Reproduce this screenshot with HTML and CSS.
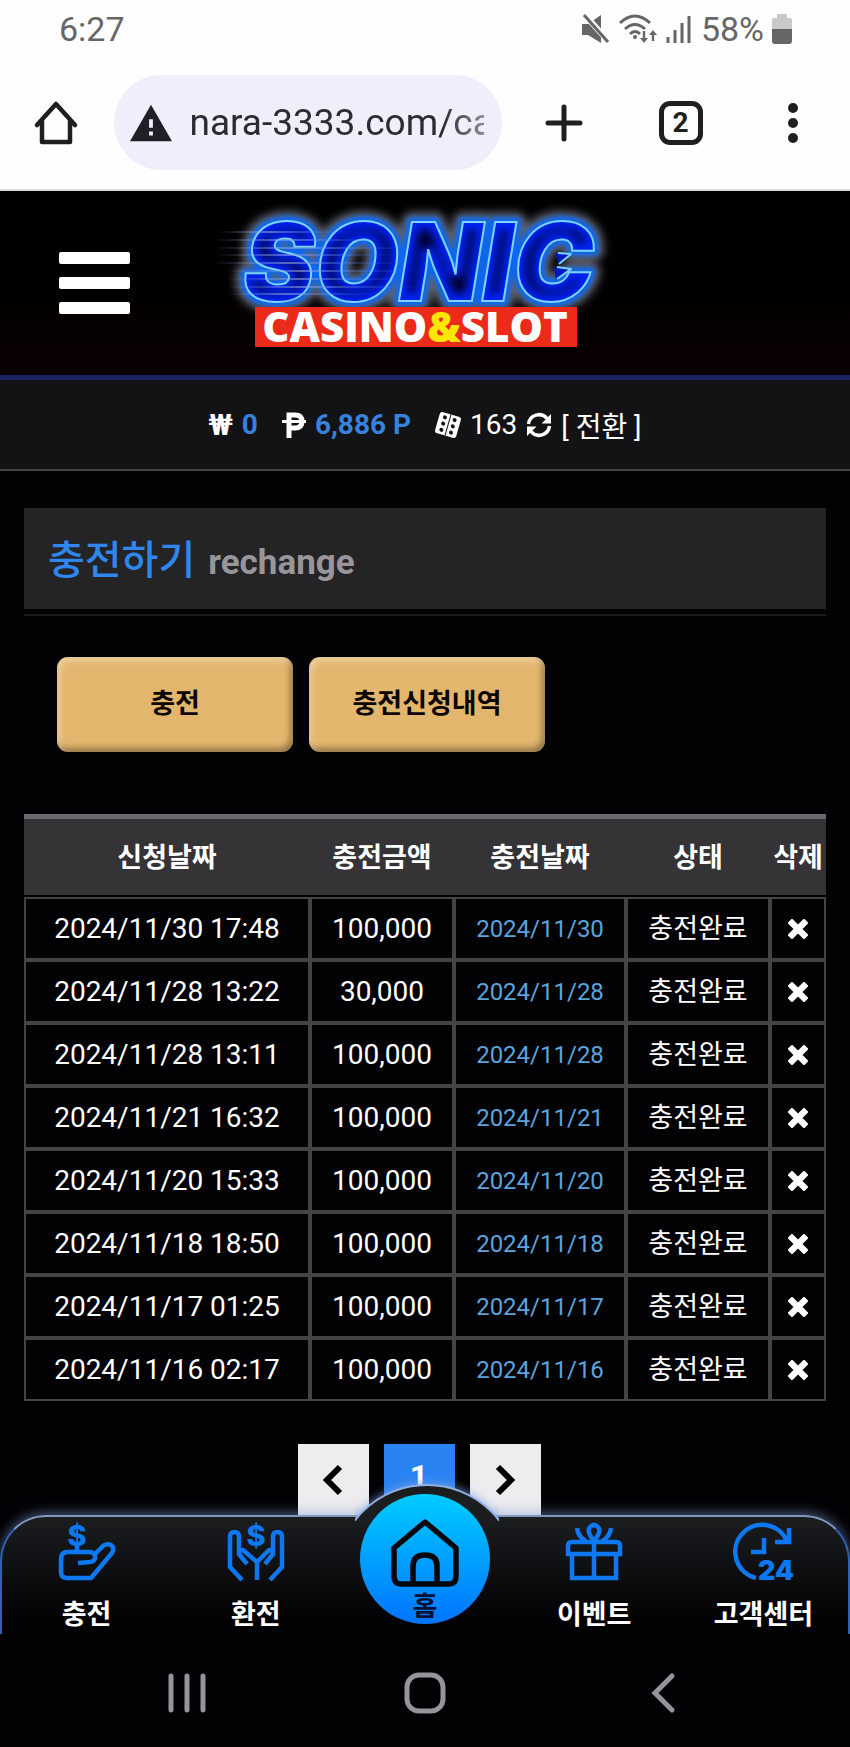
FILE: index.html
```html
<!DOCTYPE html>
<html lang="ko">
<head>
    <meta charset="UTF-8">
    <meta name="viewport" content="width=device-width, initial-scale=1.0">
    <title>충전하기</title>
    <link rel="stylesheet" href="styles.css">
</head>
<body>

    <!-- shared icons -->
    <svg class="sprite" aria-hidden="true">
        <symbol id="icon-x" viewBox="0 0 20 20">
            <path d="M4 4l12 12M16 4L4 16" stroke="#fff" stroke-width="6.4" stroke-linecap="square" stroke-linejoin="round" fill="none"/>
        </symbol>
    </svg>

    <div class="status-bar">
        <span>6:27</span>
        <div class="status-icons">
            <svg width="30" height="30" viewBox="0 0 30 30">
                <path d="M1 10h6l13-9v28l-13-8H1z" fill="#666"/>
                <path d="M3 0l26 29" stroke="#fdfdfd" stroke-width="6"/>
                <path d="M3 1l24 27" stroke="#666" stroke-width="3"/>
            </svg>
            <svg width="38" height="30" viewBox="0 0 38 30" fill="none" stroke="#666" stroke-width="3">
                <path d="M1 9q15-14 30 0M6 15q10-9 20 0M11 20q5-5 10 0"/>
                <circle cx="16" cy="23" r="2" fill="#666" stroke="none"/>
                <path d="M25 17v10M34 27V18" stroke-width="2.4"/>
                <path d="M21 24l4 5 4-5zM30 21l4-5 4 5z" fill="#666" stroke="none"/>
            </svg>
            <svg width="28" height="30" viewBox="0 0 28 30" stroke="#666" stroke-width="3">
                <path d="M3 23v6M10 16v13M17 9v20M24 2v27"/>
            </svg>
            <span>58%</span>
            <svg width="20" height="30" viewBox="0 0 20 30">
                <path d="M5 0h10v4h3q2 0 2 2v9H0V6q0-2 2-2h3z" fill="#c9c9c9"/>
                <path d="M0 15h20v12q0 3-3 3H3q-3 0-3-3z" fill="#666"/>
            </svg>
        </div>
    </div>

    <div class="browser-bar">
        <button class="bar-button" aria-label="Home">
            <svg width="44" height="44" viewBox="0 0 44 44" fill="none" stroke="#1f1f21" stroke-width="4.5" stroke-linejoin="round" stroke-linecap="round">
                <path d="M3 24L22 3l19 21M8 20v21h28V20"/>
            </svg>
        </button>
        <div class="url">
            <svg width="42" height="38" viewBox="0 0 44 38">
                <path d="M22 0l22 38H0z" fill="#1f1f25"/>
                <path d="M22 15v9M22 28v4" stroke="#f0eefa" stroke-width="4"/>
            </svg>
            <input class="url-text" type="text" value="nara-3333.com/ca" aria-label="URL">
        </div>
        <button class="bar-button" aria-label="New tab">
            <svg width="38" height="38" viewBox="0 0 38 38" stroke="#1f1f21" stroke-width="5" stroke-linecap="round">
                <path d="M19 3v32M3 19h32"/>
            </svg>
        </button>
        <button class="tab-count">2</button>
        <button class="bar-button" aria-label="Menu">
            <svg width="10" height="40" viewBox="0 0 10 40" fill="#1f1f21">
                <circle cx="5" cy="5" r="5"/><circle cx="5" cy="20" r="5"/><circle cx="5" cy="35" r="5"/>
            </svg>
        </button>
    </div>

    <header class="header">
        <button class="menu-button" aria-label="메뉴">
            <span></span><span></span><span></span>
        </button>
        <a href="#" class="logo">
            <svg width="425" height="170" viewBox="200 198 425 170">
                <defs>
                    <text id="sonic" x="243" y="301" class="sonic">SONIC</text>
                    <clipPath id="sonic-clip"><use href="#sonic"/></clipPath>
                    <filter id="blur2"><feGaussianBlur stdDeviation="2"/></filter>
                    <filter id="blur4"><feGaussianBlur stdDeviation="4"/></filter>
                    <linearGradient id="speed" x1="0" x2="1">
                        <stop offset="0" stop-color="#8fa4d8" stop-opacity="0"/>
                        <stop offset=".4" stop-color="#8fa4d8" stop-opacity=".6"/>
                        <stop offset="1" stop-color="#3a6cff" stop-opacity="0"/>
                    </linearGradient>
                </defs>
                <use href="#sonic" fill="none" stroke="#9aa3b8" stroke-width="20" stroke-linejoin="round" opacity=".6" filter="url(#blur4)"/>
                <use href="#sonic" fill="#0b62e8" stroke="#0b66ee" stroke-width="10" stroke-linejoin="round" filter="url(#blur2)"/>
                <g clip-path="url(#sonic-clip)">
                    <rect x="230" y="215" width="390" height="95" fill="#010232"/>
                    <use href="#sonic" fill="none" stroke="#0024f4" stroke-width="15" filter="url(#blur4)"/>
                </g>
                <use href="#sonic" fill="none" stroke="#79d4ff" stroke-width="2"/>
                <!-- teeth inside the last letter -->
                <path d="M555 253l16 1-12 10zM554 267l17 2-15 11z" fill="#0018c0"/>
                <path d="M558 253l13 1-12 10M557 267l14 2-14 10" fill="none" stroke="#79d4ff" stroke-width="2" stroke-linejoin="round"/>
                <g fill="url(#speed)">
                    <rect x="218" y="231" width="130" height="2"/>
                    <rect x="214" y="239" width="170" height="2"/>
                    <rect x="214" y="247" width="200" height="2"/>
                    <rect x="216" y="254" width="180" height="2"/>
                    <rect x="214" y="262" width="190" height="2"/>
                    <rect x="226" y="270" width="190" height="2"/>
                    <rect x="228" y="278" width="180" height="2"/>
                    <rect x="228" y="286" width="190" height="2"/>
                    <rect x="228" y="293" width="150" height="2"/>
                </g>
                <rect x="255" y="307" width="322" height="40" fill="#ec2a1a"/>
                <text x="415" y="342" text-anchor="middle" class="casino">CASINO<tspan fill="#ffe600">&amp;</tspan>SLOT</text>
            </svg>
        </a>
    </header>

    <div class="account">
        <span class="account-item">
            <span class="won">₩</span>
            <b>0</b>
        </span>
        <span class="account-item">
            <svg width="24" height="26" viewBox="0 0 24 26" fill="none" stroke="#fff">
                <path d="M7 26V3h6q7 0 7 6.500t-7 6.500H7" stroke-width="5"/>
                <path d="M0 9.500h24" stroke-width="3"/>
            </svg>
            <b>6,886 P</b>
        </span>
        <span class="account-item">
            <svg width="26" height="26" viewBox="0 0 26 26">
                <g transform="rotate(16 13 13)">
                    <rect x="2" y="2" width="22" height="22" rx="3" fill="#fff"/>
                    <path d="M13 2v22" stroke="#131214" stroke-width="1"/>
                    <g fill="#131214">
                        <circle cx="8" cy="6.500" r="2"/><circle cx="8" cy="13" r="2"/><circle cx="8" cy="19.500" r="2"/>
                        <circle cx="18" cy="6.500" r="2"/><circle cx="18" cy="13" r="2"/><circle cx="18" cy="19.500" r="2"/>
                    </g>
                </g>
            </svg>
            <span>163</span>
            <svg width="26" height="26" viewBox="0 0 26 26" fill="none" stroke="#fff" stroke-width="3.500">
                <path d="M2.500 12A10.500 10.500 0 0 1 21 6.500M23.500 14A10.500 10.500 0 0 1 5 19.500"/>
                <path d="M25 2v9.500h-9.500zM1 24v-9.500h9.500z" fill="#fff" stroke="none"/>
            </svg>
            <a href="#">[ 전환 ]</a>
        </span>
    </div>

    <main class="content">
        <div class="title-box">
            <h1 class="title">충전하기 <span>rechange</span></h1>
        </div>

        <div class="buttons">
            <button class="gold-button">충전</button>
            <button class="gold-button">충전신청내역</button>
        </div>

        <table class="history">
            <colgroup>
                <col class="col-date"><col class="col-amount"><col class="col-done"><col class="col-state"><col class="col-delete">
            </colgroup>
            <thead>
                <tr><th>신청날짜</th><th>충전금액</th><th>충전날짜</th><th>상태</th><th>삭제</th></tr>
            </thead>
            <tbody>
                <tr>
                    <td>2024/11/30 17:48</td><td>100,000</td><td class="done">2024/11/30</td><td class="state">충전완료</td>
                    <td><button class="delete" aria-label="삭제"><svg width="20" height="20"><use href="#icon-x"/></svg></button></td>
                </tr>
                <tr>
                    <td>2024/11/28 13:22</td><td>30,000</td><td class="done">2024/11/28</td><td class="state">충전완료</td>
                    <td><button class="delete" aria-label="삭제"><svg width="20" height="20"><use href="#icon-x"/></svg></button></td>
                </tr>
                <tr>
                    <td>2024/11/28 13:11</td><td>100,000</td><td class="done">2024/11/28</td><td class="state">충전완료</td>
                    <td><button class="delete" aria-label="삭제"><svg width="20" height="20"><use href="#icon-x"/></svg></button></td>
                </tr>
                <tr>
                    <td>2024/11/21 16:32</td><td>100,000</td><td class="done">2024/11/21</td><td class="state">충전완료</td>
                    <td><button class="delete" aria-label="삭제"><svg width="20" height="20"><use href="#icon-x"/></svg></button></td>
                </tr>
                <tr>
                    <td>2024/11/20 15:33</td><td>100,000</td><td class="done">2024/11/20</td><td class="state">충전완료</td>
                    <td><button class="delete" aria-label="삭제"><svg width="20" height="20"><use href="#icon-x"/></svg></button></td>
                </tr>
                <tr>
                    <td>2024/11/18 18:50</td><td>100,000</td><td class="done">2024/11/18</td><td class="state">충전완료</td>
                    <td><button class="delete" aria-label="삭제"><svg width="20" height="20"><use href="#icon-x"/></svg></button></td>
                </tr>
                <tr>
                    <td>2024/11/17 01:25</td><td>100,000</td><td class="done">2024/11/17</td><td class="state">충전완료</td>
                    <td><button class="delete" aria-label="삭제"><svg width="20" height="20"><use href="#icon-x"/></svg></button></td>
                </tr>
                <tr>
                    <td>2024/11/16 02:17</td><td>100,000</td><td class="done">2024/11/16</td><td class="state">충전완료</td>
                    <td><button class="delete" aria-label="삭제"><svg width="20" height="20"><use href="#icon-x"/></svg></button></td>
                </tr>
            </tbody>
        </table>

        <div class="pager">
            <a href="#" class="page" aria-label="이전">
                <svg width="20" height="30" viewBox="0 0 20 30" fill="none" stroke="#000" stroke-width="6"><path d="M17 2L4 15l13 13"/></svg>
            </a>
            <a href="#" class="page current">1</a>
            <a href="#" class="page" aria-label="다음">
                <svg width="20" height="30" viewBox="0 0 20 30" fill="none" stroke="#000" stroke-width="6"><path d="M3 2l13 13L3 28"/></svg>
            </a>
        </div>
    </main>

    <nav class="bottom-nav">
        <a href="#" class="nav-item">
            <svg width="58" height="58" viewBox="0 0 58 58" fill="none" stroke="#0d78f2" stroke-width="4.500" stroke-linejoin="round">
                <text x="19" y="23" class="dollar">$</text>
                <path d="M19 22v6"/>
                <path d="M20 40l12-1q6-1 5-6-1-4-6-4H10q-7 0-7 7v13q0 6 6 6h24l21-25q3-5-1-8-4-2-8 1l-9 9"/>
            </svg>
            <span>충전</span>
        </a>
        <a href="#" class="nav-item">
            <svg width="58" height="58" viewBox="0 0 58 58" fill="none" stroke="#0d78f2" stroke-width="4.500" stroke-linejoin="round">
                <text x="29" y="23" class="dollar">$</text>
                <path d="M15 57L3 44V14q0-5 4.500-5t4.500 5v17l8 10M12 31q0-4 4-4l14 12v18M43 57l12-13V14q0-5-4.500-5t-4.500 5v17l-8 10M46 31q0-4-4-4L30 39"/>
            </svg>
            <span>환전</span>
        </a>
        <a href="#" class="nav-item home">
            <svg width="68" height="68" viewBox="0 0 68 68" fill="none" stroke="#05070c" stroke-width="5.500" stroke-linejoin="round">
                <path d="M34 3L3 29v28q0 8 7 8h48q7 0 7-8V29zM22 65V47q0-11 12-11t12 11v18"/>
            </svg>
            <span>홈</span>
        </a>
        <a href="#" class="nav-item">
            <svg width="58" height="58" viewBox="0 0 58 58" fill="none" stroke="#0d78f2" stroke-width="4.500">
                <path d="M3 31V23q0-4 4-4h44q4 0 4 4v8zM7 31v24h44V31M29 19v36"/>
                <path d="M29 18q-8-10-4-14 4-4 8 0 4 4-4 14zM12 5q1 9 9 13M46 5q-1 9-9 13"/>
            </svg>
            <span>이벤트</span>
        </a>
        <a href="#" class="nav-item">
            <svg width="58" height="58" viewBox="0 0 58 58" fill="none" stroke="#0d78f2" stroke-width="4.500">
                <path d="M22 55A27 27 0 1 1 53 18M55 5v14H41M30 15v14H17"/>
                <text x="42" y="57" class="hours">24</text>
            </svg>
            <span>고객센터</span>
        </a>
    </nav>

    <div class="system-nav">
        <button aria-label="Recents">
            <svg width="38" height="40" viewBox="0 0 38 40" stroke="#969498" stroke-width="5" stroke-linecap="round"><path d="M3 3v34M19 3v34M35 3v34"/></svg>
        </button>
        <button aria-label="Home screen">
            <svg width="42" height="42" viewBox="0 0 42 42" fill="none" stroke="#969498" stroke-width="5"><rect x="3" y="3" width="36" height="36" rx="12"/></svg>
        </button>
        <button aria-label="Back">
            <svg width="24" height="40" viewBox="0 0 24 40" fill="none" stroke="#969498" stroke-width="5" stroke-linecap="round"><path d="M21 3L4 20l17 17"/></svg>
        </button>
    </div>

</body>
</html>
```
FILE: styles.css
```css
* {
    box-sizing: border-box;
}
body {
    margin: 0;
    background-color: #020104;
    color: #fff;
    font-family: Roboto, "Noto Sans CJK KR", sans-serif;
    font-size: 28px;
}
button {
    background: none;
    border: none;
    padding: 0;
    font-family: inherit;
    cursor: pointer;
}
a {
    color: inherit;
    text-decoration: none;
}
svg {
    display: block;
    flex: none;
    overflow: visible;
}
.sprite {
    position: absolute;
    width: 0;
    height: 0;
}

/* phone status bar */
.status-bar {
    display: flex;
    justify-content: space-between;
    align-items: center;
    height: 58px;
    padding: 0 58px 0 59px;
    background-color: #fefefe;
    color: #666;
    font-size: 34px;
}
.status-icons {
    display: flex;
    align-items: center;
    gap: 8px;
}

/* browser toolbar */
.browser-bar {
    display: flex;
    align-items: center;
    justify-content: space-between;
    height: 133px;
    padding: 0 52px 2px 34px;
    background-color: #fefefe;
    border-bottom: 2px solid #d9dcdc;
}
.url {
    display: flex;
    align-items: center;
    gap: 18px;
    width: 388px;
    height: 95px;
    margin-right: 8px;
    padding: 0 18px 0 16px;
    border-radius: 48px;
    background-color: #f0eefa;
}
.url-text {
    flex: 1;
    min-width: 0;
    padding: 0;
    border: none;
    outline: none;
    background: none;
    color: #2b2b31;
    font-family: inherit;
    font-size: 37px;
    -webkit-mask-image: linear-gradient(to right, #000 86%, rgba(0, 0, 0, .5));
    mask-image: linear-gradient(to right, #000 86%, rgba(0, 0, 0, .5));
}
.tab-count {
    width: 44px;
    height: 44px;
    margin-left: 40px;
    border: 5px solid #1f1f21;
    border-radius: 11px;
    color: #1f1f21;
    font-size: 28px;
    font-weight: bold;
    line-height: 34px;
}
.bar-button:last-child {
    margin-left: 50px;
}

/* site header */
.header {
    display: flex;
    align-items: center;
    height: 189px;
    padding-left: 59px;
    background: linear-gradient(#000, #030001 60%, #0a0002);
    border-bottom: 5px solid #1c2260;
}
.menu-button {
    display: flex;
    flex-direction: column;
    gap: 13px;
    width: 71px;
}
.menu-button span {
    height: 12px;
    border-radius: 2px;
    background-color: #fff;
}
.logo {
    margin-left: 70px;
}
.sonic {
    font-family: Inter, sans-serif;
    font-size: 108px;
    font-weight: 900;
    font-style: italic;
}
.casino {
    fill: #fff;
    font-family: "Open Sans", sans-serif;
    font-size: 42px;
    font-weight: 800;
}

/* balance line */
.account {
    display: flex;
    justify-content: center;
    align-items: center;
    gap: 24px;
    height: 91px;
    background-color: #131214;
    border-bottom: 2px solid #444346;
}
.account-item {
    display: flex;
    align-items: center;
    gap: 9px;
}
.account b {
    color: #3682dc;
}
.won {
    font-size: 30px;
    font-weight: bold;
}

/* page content */
.content {
    padding: 37px 24px 0;
}
.title-box {
    padding-bottom: 5px;
    border-bottom: 2px solid #1b1a1d;
}
.title {
    display: flex;
    align-items: baseline;
    gap: 13px;
    height: 101px;
    margin: 0;
    padding: 0 24px;
    background-color: #242326;
    color: #2f86ec;
    font-size: 40px;
    font-weight: 500;
    line-height: 106px;
}
.title span {
    color: #98969a;
    font-size: 35px;
    font-weight: bold;
    line-height: 40px;
}
.buttons {
    display: flex;
    gap: 16px;
    padding: 41px 33px 62px;
}
.gold-button {
    width: 236px;
    height: 95px;
    padding-bottom: 6px;
    border-radius: 11px;
    background-color: #e3b66d;
    box-shadow: inset 3px 4px 6px rgba(255, 255, 255, .35), inset -3px -4px 6px rgba(0, 0, 0, .35);
    color: #0c0500;
    font-size: 27px;
    font-weight: bold;
}

.history {
    width: 100%;
    table-layout: fixed;
    border-collapse: separate;
    border-spacing: 0;
    text-align: center;
}
.col-date {
    width: 286px;
}
.col-amount {
    width: 144px;
}
.col-done {
    width: 172px;
}
.col-state {
    width: 144px;
}
.col-delete {
    width: 56px;
}
.history th {
    height: 83px;
    padding: 0 0 4px;
    background-color: #353336;
    border-top: 5px solid #69676b;
    border-bottom: 2px solid #020104;
    font-size: 27px;
    font-weight: bold;
    white-space: nowrap;
}
.history td {
    height: 63px;
    padding: 0;
    border: 2px solid #444346;
}
.history .done {
    color: #5ba4dc;
    font-size: 24px;
}
.history .state {
    padding-bottom: 4px;
    font-size: 27px;
}
.delete {
    display: block;
    margin: 0 auto;
}

.pager {
    display: flex;
    justify-content: center;
    gap: 15px;
    padding: 43px 12px 0 0;
}
.page {
    display: flex;
    justify-content: center;
    align-items: center;
    width: 71px;
    height: 71px;
    background-color: #eeecef;
}
.page.current {
    background-color: #2a83f2;
    font-size: 32px;
    font-weight: bold;
    line-height: 64px;
    align-items: flex-start;
}

/* bottom menu */
.bottom-nav {
    position: relative;
    display: grid;
    grid-template-columns: repeat(5, 1fr);
    height: 119px;
    border: 2px solid #2c62b8;
    border-top-color: #8098c0;
    border-bottom: none;
    border-radius: 46px 46px 0 0;
    background: linear-gradient(#1b1d1f, #020104 90%);
    box-shadow: 0 -3px 12px rgba(130, 155, 210, .5);
}
/* round bump behind the home button */
.bottom-nav::before {
    content: "";
    position: absolute;
    top: -33px;
    left: calc(50% - 90px);
    width: 180px;
    height: 180px;
    border: 2px solid #8fb0e4;
    border-radius: 50%;
    background-color: #1b1d1f;
    box-shadow: 0 -2px 8px rgba(130, 165, 230, .6);
    clip-path: inset(-20px 20px 147px 20px);
}
.nav-item {
    display: flex;
    flex-direction: column;
    align-items: center;
    gap: 14px;
    padding-top: 6px;
    font-size: 27px;
    font-weight: bold;
    line-height: 40px;
}
.home {
    position: relative;
    justify-self: center;
    width: 130px;
    height: 130px;
    margin-top: -23px;
    padding-top: 25px;
    gap: 0;
    border-radius: 50%;
    background: linear-gradient(#00ccff, #0074ff);
    color: #001233;
}
.dollar {
    fill: #0d78f2;
    stroke: none;
    font-family: Inter, sans-serif;
    font-size: 29px;
    font-weight: 800;
    text-anchor: middle;
}
.hours {
    fill: #0d78f2;
    stroke: none;
    font-family: Inter, sans-serif;
    font-size: 27px;
    font-weight: 900;
    text-anchor: middle;
}

/* phone buttons */
.system-nav {
    position: relative;
    display: grid;
    grid-template-columns: repeat(3, 1fr);
    align-items: center;
    justify-items: center;
    height: 113px;
    padding: 4px 8% 0;
    background-color: #020104;
}
```
